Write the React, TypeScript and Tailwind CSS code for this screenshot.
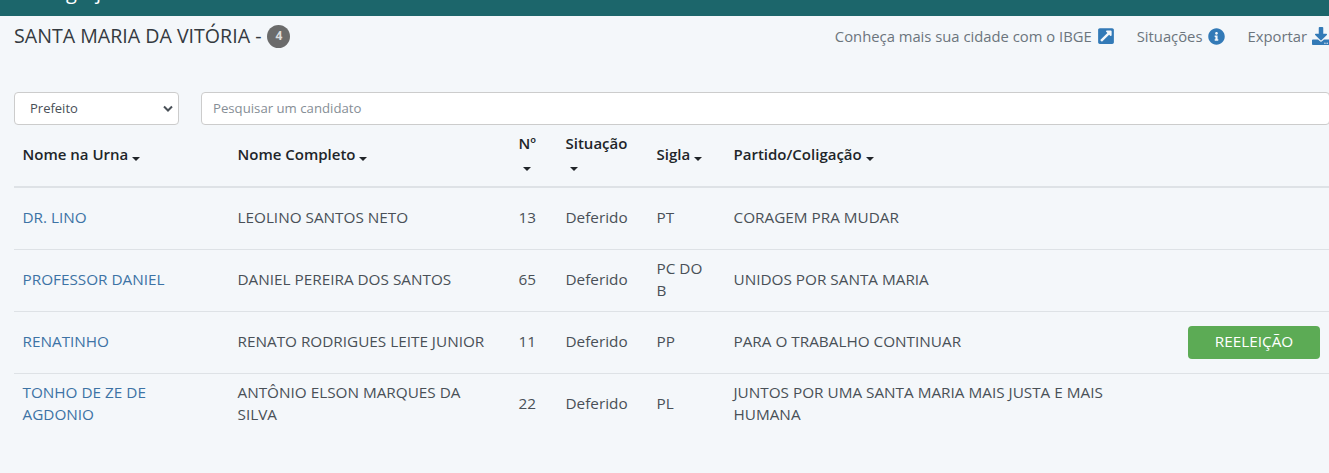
import React from 'react'
import { FaDownload, FaExternalLinkSquareAlt, FaInfoCircle } from 'react-icons/fa'

type Candidato = {
  urna: string
  nome: string
  numero: number
  situacao: string
  sigla: string
  partido: string
  reeleicao?: boolean
}

const candidatos: Candidato[] = [
  { urna: 'DR. LINO', nome: 'LEOLINO SANTOS NETO', numero: 13, situacao: 'Deferido', sigla: 'PT', partido: 'CORAGEM PRA MUDAR' },
  { urna: 'PROFESSOR DANIEL', nome: 'DANIEL PEREIRA DOS SANTOS', numero: 65, situacao: 'Deferido', sigla: 'PC DO B', partido: 'UNIDOS POR SANTA MARIA' },
  { urna: 'RENATINHO', nome: 'RENATO RODRIGUES LEITE JUNIOR', numero: 11, situacao: 'Deferido', sigla: 'PP', partido: 'PARA O TRABALHO CONTINUAR', reeleicao: true },
  { urna: 'TONHO DE ZE DE AGDONIO', nome: 'ANTÔNIO ELSON MARQUES DA SILVA', numero: 22, situacao: 'Deferido', sigla: 'PL', partido: 'JUNTOS POR UMA SANTA MARIA MAIS JUSTA E MAIS HUMANA' }
]

const colunas = [
  { titulo: 'Nome na Urna' },
  { titulo: 'Nome Completo' },
  { titulo: 'Nº', quebra: true },
  { titulo: 'Situação', quebra: true },
  { titulo: 'Sigla' },
  { titulo: 'Partido/Coligação' }
]

const Caret = () => (
  <span className="ml-[4px] inline-block border-x-[4px] border-t-[4px] border-x-transparent border-t-[#212529] align-[-1px]" />
)

const App: React.FC = () => {
  return (
    <div className="h-[473px] w-[1329px] overflow-hidden bg-[#f4f7fa] font-['Open_Sans',sans-serif] text-[15.3px] leading-[22.4px] text-[#495057]">
      {/* barra do topo, o texto aparece cortado */}
      <div className="relative h-[16px] overflow-hidden bg-[#1c666b] text-[20px] leading-[20px] text-white">
        <span className="absolute left-[66px] top-[-18px]">g</span>
        <span className="absolute left-[96px] top-[-18px]">j</span>
      </div>

      <div className="pl-[14px]">
        {/* titulo e links */}
        <div className="flex h-[76px] items-start justify-between whitespace-nowrap">
          <div className="flex items-center pt-[8px] text-[19.6px] leading-[24px] text-[#343a40]">
            SANTA MARIA DA VITÓRIA -
            <span className="ml-[6px] flex h-[23px] w-[23px] items-center justify-center rounded-full bg-[#6b6b6b] text-[12px] font-bold text-[#dddddd]">
              4
            </span>
          </div>
          <div className="mr-[-1px] flex items-center pt-[9px] text-[14.8px] text-[#6c757d]">
            <span>Conheça mais sua cidade com o IBGE</span>
            <FaExternalLinkSquareAlt className="ml-[5px] text-[18px] text-[#337ab7]" />
            <span className="ml-[22px]">Situações</span>
            <FaInfoCircle className="ml-[6px] text-[17px] text-[#337ab7]" />
            <span className="ml-[22px]">Exportar</span>
            <FaDownload className="ml-[5px] text-[18px] text-[#337ab7]" />
          </div>
        </div>

        {/* filtros */}
        <div className="flex gap-[22px]">
          <div className="relative h-[33px] w-[165px] shrink-0">
            <select className="h-full w-full appearance-none rounded-[4px] border border-[#cccccc] bg-white pl-[15px] text-[13px] text-[#495057]">
              <option>Prefeito</option>
            </select>
            <svg className="pointer-events-none absolute right-[6px] top-[13px] h-[7px] w-[10px] text-[#495057]" viewBox="0 0 10 7" fill="none" stroke="currentColor" strokeWidth="2">
              <path d="M1 1.5l4 4 4-4" />
            </svg>
          </div>
          <input
            className="mr-[-1px] h-[33px] min-w-0 flex-1 rounded-[4px] border border-[#cccccc] bg-white px-[11px] pb-[2px] text-[13.2px] outline-none placeholder:text-[#868e96]"
            placeholder="Pesquisar um candidato"
          />
        </div>

        {/* tabela */}
        <table className="w-[1315px] table-fixed border-collapse">
          <colgroup>
            <col className="w-[215px]" />
            <col className="w-[281px]" />
            <col className="w-[47px]" />
            <col className="w-[91px]" />
            <col className="w-[77px]" />
            <col className="w-[455px]" />
            <col className="w-[149px]" />
          </colgroup>
          <thead>
            <tr className="h-[62px] border-b-2 border-[#dee2e6]">
              {colunas.map((coluna) => (
                <th
                  key={coluna.titulo}
                  className={coluna.quebra ? 'pb-[5px] pl-[8.5px] pr-[8px] text-left align-middle text-[15px] font-semibold text-[#212529]' : 'pb-[2px] pl-[8.5px] pr-[8px] text-left align-middle text-[15px] font-semibold text-[#212529]'}
                >
                  {coluna.titulo}
                  {coluna.quebra ? (
                    <span className="block leading-[20px]">
                      <Caret />
                    </span>
                  ) : (
                    <Caret />
                  )}
                </th>
              ))}
              <th />
            </tr>
          </thead>
          <tbody>
            {candidatos.map((c) => (
              <tr key={c.urna} className="h-[62px] border-b border-[#dee2e6] last:border-b-0">
                <td className="pb-[2px] pl-[8.5px] pr-[16px] align-middle text-[#3d73a5]">{c.urna}</td>
                <td className="pb-[2px] pl-[8.5px] pr-[20px] align-middle">{c.nome}</td>
                <td className="pb-[2px] pl-[8.5px] pr-[8px] align-middle">{c.numero}</td>
                <td className="pb-[2px] pl-[8.5px] pr-[8px] align-middle">{c.situacao}</td>
                <td className="pb-[2px] pl-[8.5px] pr-[14px] align-middle">{c.sigla}</td>
                <td className="pb-[2px] pl-[8.5px] pr-[60px] align-middle">{c.partido}</td>
                <td className="px-[8px] align-middle">
                  {c.reeleicao && (
                    <div className="flex h-[33px] w-[132px] items-center justify-center rounded-[4px] bg-[#5cab55] pb-[1px] text-white">
                      REELEIÇÃO
                    </div>
                  )}
                </td>
              </tr>
            ))}
          </tbody>
        </table>
      </div>
    </div>
  )
}

export default App
